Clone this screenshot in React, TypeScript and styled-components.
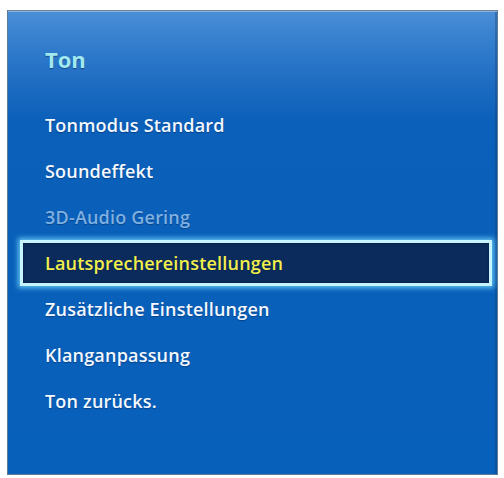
import React from 'react'
import styled, { createGlobalStyle } from 'styled-components'

const GlobalStyle = createGlobalStyle`
  html, body {
    margin: 0;
    padding: 0;
    background: #ffffff;
  }
  body {
    width: 504px;
    height: 478px;
    overflow: hidden;
    font-family: 'Open Sans', 'DejaVu Sans', sans-serif;
  }
`

const items: { label: string; state?: 'disabled' | 'selected' }[] = [
  { label: 'Tonmodus Standard' },
  { label: 'Soundeffekt' },
  { label: '3D-Audio Gering', state: 'disabled' },
  { label: 'Lautsprechereinstellungen', state: 'selected' },
  { label: 'Zusätzliche Einstellungen' },
  { label: 'Klanganpassung' },
  { label: 'Ton zurücks.' },
]

const App = (): React.ReactElement => (
  <>
    <GlobalStyle />
    <Page>
      <Panel>
        <Title>Ton</Title>
        <Menu>
          {items.map((item) => (
            <Item key={item.label} $state={item.state}>
              {item.label}
            </Item>
          ))}
        </Menu>
      </Panel>
    </Page>
  </>
)

export default App

const Page = styled.div`
  padding: 10px 6px 3px 7px;
  box-sizing: border-box;
  width: 504px;
  height: 478px;
`

const Panel = styled.div`
  box-sizing: border-box;
  height: 465px;
  border: 1px solid #5d7a98;
  border-top-color: #6f8296;
  background: linear-gradient(
    to bottom,
    #4a8ed6 0px,
    #2f7acb 40px,
    #1a69c0 80px,
    #0b60b9 110px,
    #0760ba 100%
  );
  box-shadow: inset 0 1px 0 #8ab6e4, inset -2px 0 0 rgba(20, 60, 110, 0.35);
  padding: 35px 0 0 0;
`

const Title = styled.div`
  padding-left: 37px;
  height: 26px;
  line-height: 26px;
  font-size: 22px;
  font-weight: 700;
  color: #a2e9ef;
  text-shadow: 0 1px 1px rgba(0, 30, 80, 0.5);
`

const Menu = styled.div`
  display: flex;
  flex-direction: column;
  padding-top: 30px;
`

const Item = styled.div<{ $state?: 'disabled' | 'selected' }>`
  height: 46px;
  box-sizing: border-box;
  display: flex;
  align-items: center;
  padding-left: 37px;
  font-size: 18px;
  font-weight: 600;
  letter-spacing: 0.2px;
  color: ${(p) =>
    p.$state === 'disabled'
      ? '#7fb0e2'
      : p.$state === 'selected'
        ? '#f2ef4a'
        : '#f4f8ff'};
  text-shadow: 0 1px 1px rgba(0, 30, 80, 0.45);

  ${(p) =>
    p.$state === 'selected' &&
    `
    margin: 0 5px 0 12px;
    padding-left: 22px;
    background: #0b2b5c;
    border: 3px solid #c8f4ff;
    box-shadow: 0 0 5px 2px rgba(120, 220, 255, 0.8), inset 0 0 2px rgba(0,0,0,0.5);
  `}
`
